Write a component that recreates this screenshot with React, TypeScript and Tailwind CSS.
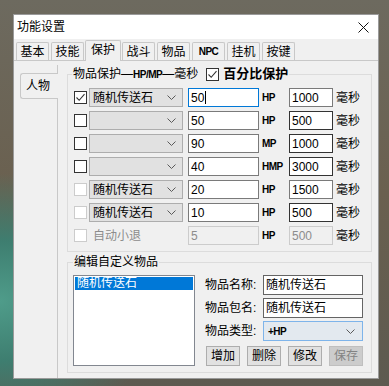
import React from 'react';

type Row = {
  box: 'on' | 'off' | 'dim';
  item: string;
  value: string;
  unit: string;
  ms: string;
  focus?: boolean;
  msDark?: boolean;
  auto?: boolean;
};

const rows: Row[] = [
  { box: 'on', item: '随机传送石', value: '50', unit: 'HP', ms: '1000', focus: true },
  { box: 'off', item: '', value: '50', unit: 'HP', ms: '500', msDark: true },
  { box: 'off', item: '', value: '90', unit: 'MP', ms: '1000', msDark: true },
  { box: 'off', item: '', value: '40', unit: 'HMP', ms: '3000', msDark: true },
  { box: 'dim', item: '随机传送石', value: '20', unit: 'HP', ms: '1500' },
  { box: 'dim', item: '随机传送石', value: '10', unit: 'HP', ms: '500', msDark: true },
  { box: 'dim', item: '自动小退', value: '5', unit: 'HP', ms: '500', auto: true },
];

const tabs = ['基本', '技能', '保护', '战斗', '物品', 'NPC', '挂机', '按键'];

const Chevron = () => (
  <svg width="9" height="5" viewBox="0 0 9 5" className="shrink-0">
    <path d="M0.5 0.5 L4.5 4.5 L8.5 0.5" fill="none" stroke="#5a5a5a" strokeWidth="1" />
  </svg>
);

const Check = ({ state }: { state: 'on' | 'off' | 'dim' }) => (
  <div
    className={`w-[13px] h-[13px] shrink-0 bg-white border flex items-center justify-center ${
      state === 'dim' ? 'border-[#cccccc]' : 'border-[#333333]'
    }`}
  >
    {state === 'on' && (
      <svg width="11" height="11" viewBox="0 0 11 11">
        <path d="M1.5 5.5 L4.2 8.3 L9.5 2.2" fill="none" stroke="#333" strokeWidth="1.1" />
      </svg>
    )}
  </div>
);

const Unit = ({ text }: { text: string }) => (
  <span className="w-[27px] ml-[3px] text-[10px] font-bold tracking-[-0.5px] leading-none">{text}</span>
);

export default function App() {
  return (
    <div className="w-[389px] h-[386px] overflow-hidden bg-[image:radial-gradient(ellipse_at_0%_78%,#4f9c8a_0%,#3e7e70_14%,transparent_30%),linear-gradient(180deg,#6d6a5f,#6a604f_50%,#5d5a50)] pt-[14px] pl-[13px] font-['Liberation_Sans','Noto_Sans_CJK_SC',sans-serif] text-[12px] text-black">
      <div className="w-[366px] h-[365px] bg-[#f0f0f0] border border-[#9a9a9a] flex flex-col">
        {/* title bar */}
        <div className="h-[24px] bg-white flex items-center pl-[3px] pr-[9px] shrink-0">
          <span className="leading-[14px]">功能设置</span>
          <svg width="11" height="11" viewBox="0 0 11 11" className="ml-auto">
            <path d="M0.5 0.5 L10.5 10.5 M10.5 0.5 L0.5 10.5" stroke="#111" strokeWidth="1" />
          </svg>
        </div>

        {/* tab strip */}
        <div className="h-[21px] flex items-end gap-[2px] pl-[2px] shrink-0">
          {tabs.map((t) =>
            t === '保护' ? (
              <div
                key={t}
                className="relative z-10 -mx-[1px] -mb-[1px] w-[36px] h-[21px] bg-[#f0f0f0] border border-b-0 border-[#c8c8c8] rounded-t-[2px] flex items-center justify-center leading-[14px] pb-[2px]"
              >
                {t}
              </div>
            ) : (
              <div
                key={t}
                className={`w-[33px] h-[18px] bg-[#f0f0f0] border border-b-0 border-[#c8c8c8] rounded-t-[2px] flex items-center justify-center ${
                  t === 'NPC' ? 'text-[10px] font-bold tracking-[-0.5px]' : 'leading-[14px]'
                }`}
              >
                {t}
              </div>
            )
          )}
        </div>

        {/* panel */}
        <div className="flex-1 flex border-t border-[#c8c8c8]">
          <div className="w-[44px] mt-[4px] border-r border-[#c8c8c8] pt-[8px] shrink-0">
            <div className="relative z-10 ml-[6px] -mr-[1px] h-[26px] bg-[#f0f0f0] border border-r-0 border-[#c8c8c8] rounded-l-[3px] flex items-center pl-[5px] leading-[14px]">
              人物
            </div>
          </div>

          <div className="flex-1 pl-[9px] pr-[6px] pt-[6px] flex flex-col">
            {/* group 1 */}
            <fieldset className="border border-[#dcdcdc] pl-[6px] pt-[7px] pb-[6px]">
              <legend className="flex items-center h-[14px] px-[1px] -ml-[2px]">
                <span className="leading-[14px]">
                  物品保护—<span className="text-[10px] font-bold tracking-[-0.5px]">HP/MP</span>—毫秒
                </span>
                <span className="ml-[8px]">
                  <Check state="on" />
                </span>
                <span className="ml-[4px] text-[13px] font-bold leading-[14px]">百分比保护</span>
              </legend>
              <div className="flex flex-col gap-[4px]">
                {rows.map((r, i) => (
                  <div key={i} className="flex items-center h-[19px]">
                    <Check state={r.box} />
                    {r.auto ? (
                      <div className="w-[94px] ml-[2px] pl-[4px] text-[#8c8c8c] leading-[14px]">{r.item}</div>
                    ) : (
                      <div className="w-[94px] h-[19px] ml-[2px] bg-[#e1e1e1] border border-[#adadad] flex items-center pl-[3px] pr-[6px]">
                        <span className="leading-[14px]">{r.item}</span>
                        <span className="ml-auto">
                          <Chevron />
                        </span>
                      </div>
                    )}
                    <div
                      className={`w-[71px] h-[19px] ml-[5px] border flex items-center pl-[2px] ${
                        r.auto
                          ? 'bg-[#f0f0f0] border-[#cccccc] text-[#8c8c8c]'
                          : r.focus
                          ? 'bg-white border-[#0078d7]'
                          : 'bg-white border-[#7a7a7a]'
                      }`}
                    >
                      {r.value}
                      {r.focus && <span className="w-[1px] h-[13px] bg-black ml-[1px]" />}
                    </div>
                    <Unit text={r.unit} />
                    <div
                      className={`w-[44px] h-[19px] border flex items-center pl-[2px] ${
                        r.auto
                          ? 'bg-[#f0f0f0] border-[#cccccc] text-[#8c8c8c]'
                          : r.msDark
                          ? 'bg-white border-[#333333]'
                          : 'bg-white border-[#7a7a7a]'
                      }`}
                    >
                      {r.ms}
                    </div>
                    <span className="ml-[3px] leading-[14px]">毫秒</span>
                  </div>
                ))}
              </div>
            </fieldset>

            {/* group 2 */}
            <fieldset className="mt-[3px] border border-[#dcdcdc] pl-[5px] pr-[7px] pt-[6px] pb-[6px]">
              <legend className="h-[14px] leading-[14px] px-[1px]">编辑自定义物品</legend>
              <div className="flex">
                <div className="w-[122px] h-[91px] bg-white border border-[#828790] p-[1px]">
                  <div className="h-[13px] bg-[#0078d7] text-white leading-[13px] pl-[2px]">随机传送石</div>
                </div>
                <div className="ml-[10px] flex flex-col gap-[3px]">
                  {['物品名称', '物品包名'].map((l) => (
                    <div key={l} className="flex items-center h-[20px]">
                      <span className="w-[58px] leading-[14px]">{l}:</span>
                      <div className="w-[100px] h-[20px] bg-white border border-[#646464] flex items-center pl-[2px] leading-[14px]">
                        随机传送石
                      </div>
                    </div>
                  ))}
                  <div className="flex items-center h-[20px]">
                    <span className="w-[58px] leading-[14px]">物品类型:</span>
                    <div className="w-[100px] h-[20px] bg-[#e3e9ef] border border-[#7eb4ea] flex items-center pl-[4px] pr-[7px]">
                      <span className="text-[10px] font-bold tracking-[-0.5px]">+HP</span>
                      <span className="ml-auto">
                        <Chevron />
                      </span>
                    </div>
                  </div>
                  <div className="flex gap-[7px] mt-[2px] ml-[1px]">
                    {['增加', '删除', '修改'].map((b) => (
                      <button
                        key={b}
                        className="w-[34px] h-[20px] bg-[#e1e1e1] border border-[#adadad] flex items-center justify-center leading-[14px]"
                      >
                        {b}
                      </button>
                    ))}
                    <button className="w-[34px] h-[20px] bg-[#cccccc] border border-[#bfbfbf] text-[#838383] flex items-center justify-center leading-[14px]">
                      保存
                    </button>
                  </div>
                </div>
              </div>
            </fieldset>
          </div>
        </div>
      </div>
    </div>
  );
}
